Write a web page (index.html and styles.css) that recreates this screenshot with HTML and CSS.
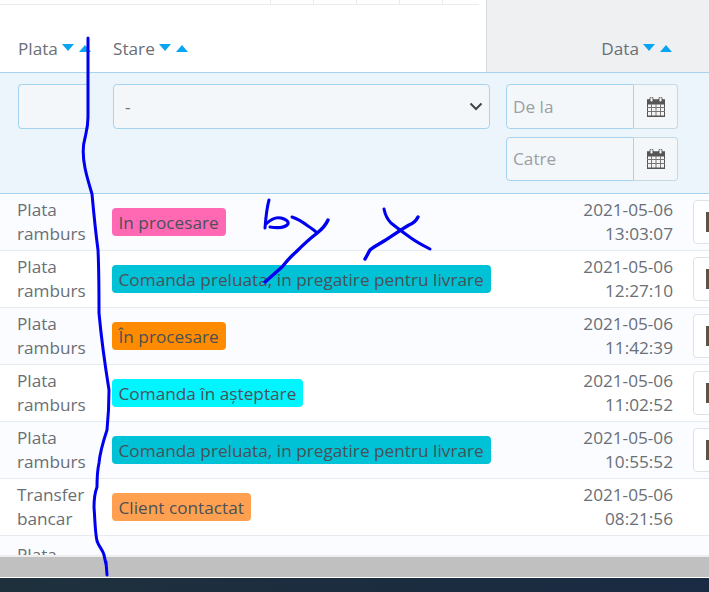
FILE: index.html
```html
<!DOCTYPE html>
<html lang="ro">
<head>
<meta charset="utf-8">
<title>Comenzi</title>
<link rel="stylesheet" href="styles.css">
</head>
<body>
<div class="page">
  <div class="table">
    <div class="head">
      <div class="head-left">
        <div class="strip"><i></i><i></i><i></i><i></i><i></i></div>
        <div class="head-labels">
          <div class="th th-plata">Plata <span class="sort"><b class="down"></b><b class="up"></b></span></div>
          <div class="th th-stare">Stare <span class="sort"><b class="down"></b><b class="up"></b></span></div>
        </div>
      </div>
      <div class="head-right">
        <div class="th">Data <span class="sort"><b class="down"></b><b class="up"></b></span></div>
      </div>
    </div>

    <div class="filters">
      <input class="field field-plata" type="text" aria-label="Plata">
      <div class="select-wrap">
        <select class="field field-select" aria-label="Stare"><option>-</option></select>
        <svg class="chevron" width="14" height="9" viewBox="0 0 14 9"><path d="M1.5 1.5 7 7l5.5-5.5" fill="none" stroke="#444" stroke-width="2"/></svg>
      </div>
      <div class="dates">
        <div class="date-group">
          <input class="field date-input" type="text" placeholder="De la">
          <span class="date-btn"><svg class="cal" width="18" height="20" viewBox="0 0 18 20"><use href="#cal"/></svg></span>
        </div>
        <div class="date-group">
          <input class="field date-input date-input-low" type="text" placeholder="Catre">
          <span class="date-btn"><svg class="cal" width="18" height="20" viewBox="0 0 18 20"><use href="#cal"/></svg></span>
        </div>
      </div>
    </div>

    <div class="row odd">
      <div class="pay">Plata<br>ramburs</div>
      <div><span class="badge pink">In procesare</span></div>
      <div class="when">2021-05-06<br>13:03:07</div>
      <div class="act"><span class="btn"><span class="btn-ico"></span></span></div>
    </div>
    <div class="row">
      <div class="pay">Plata<br>ramburs</div>
      <div><span class="badge teal">Comanda preluata, in pregatire pentru livrare</span></div>
      <div class="when">2021-05-06<br>12:27:10</div>
      <div class="act"><span class="btn"><span class="btn-ico"></span></span></div>
    </div>
    <div class="row odd">
      <div class="pay">Plata<br>ramburs</div>
      <div><span class="badge orange">În procesare</span></div>
      <div class="when">2021-05-06<br>11:42:39</div>
      <div class="act"><span class="btn"><span class="btn-ico"></span></span></div>
    </div>
    <div class="row">
      <div class="pay">Plata<br>ramburs</div>
      <div><span class="badge cyan">Comanda în aşteptare</span></div>
      <div class="when">2021-05-06<br>11:02:52</div>
      <div class="act"><span class="btn"><span class="btn-ico"></span></span></div>
    </div>
    <div class="row odd">
      <div class="pay">Plata<br>ramburs</div>
      <div><span class="badge teal">Comanda preluata, in pregatire pentru livrare</span></div>
      <div class="when">2021-05-06<br>10:55:52</div>
      <div class="act"><span class="btn"><span class="btn-ico"></span></span></div>
    </div>
    <div class="row">
      <div class="pay">Transfer<br>bancar</div>
      <div><span class="badge peach">Client contactat</span></div>
      <div class="when">2021-05-06<br>08:21:56</div>
      <div class="act"></div>
    </div>
    <div class="row odd row-cut">
      <div class="pay">Plata<br>ramburs</div>
    </div>
  </div>
  <div class="scrollbar"></div>
  <div class="taskbar"></div>

  <svg class="ink" width="709" height="592" viewBox="0 0 709 592">
    <defs>
      <g id="cal">
        <rect x="0.5" y="3" width="17" height="16.5" fill="#f4f4f4" stroke="#555"/>
        <rect x="0" y="2.5" width="18" height="5" fill="#555"/>
        <rect x="3" y="0" width="3" height="5" rx="1.5" fill="#f4f4f4" stroke="#555" stroke-width="1"/>
        <rect x="12" y="0" width="3" height="5" rx="1.5" fill="#f4f4f4" stroke="#555" stroke-width="1"/>
        <path d="M4.5 7v12M9 7v12M13.5 7v12M0 10.500h18M0 14.500h18" stroke="#777" stroke-width="1" fill="none"/>
        <rect x="0" y="18.500" width="18" height="1.500" fill="#555"/>
      </g>
    </defs>
    <g fill="none" stroke="#0000f0" stroke-width="3" stroke-linecap="round" stroke-linejoin="round">
      <path d="M88 38V117C88 127 86 133 85 138C82 148 83 158 85 168C87 178 90 187 92 194C93 205 96 235 98 250C99 270 99 295 99 313C101 335 105 365 109 390C109 405 108 420 107 430C103 442 100 452 99 463C97 472 97 480 97 487C94 495 94 500 94 507C95 520 95 532 97 541C99 547 103 550 104 555C106 562 107 568 107 575L106 562"/>
      <path d="M269 200C267 207 266 215 265 228M266 224C271 219 277 217 281 218C285 219 289 221 288 224C285 228 276 228 270 227"/>
      <path d="M292 217C298 219 304 223 308 226C311 228 314 230 316 232"/>
      <path d="M328 220C325 227 321 230 316 234C308 240 301 247 296 252C290 257 286 262 282 267L265 282" stroke-width="3.400"/>
      <path d="M384 209C385 214 387 219 391 223C396 227 404 233 411 238C418 243 424 246 430 249"/>
      <path d="M418 217C416 221 414 223 409 225C402 229 392 236 384 241C378 245 373 247 370 250C368 253 367 256 365 259" stroke-width="3.400"/>
    </g>
  </svg>
</div>
</body>
</html>
```
FILE: styles.css
```css
* { box-sizing: border-box; }
html, body { margin: 0; padding: 0; }
body { font-family: "Open Sans", "Liberation Sans", sans-serif; font-size: 17.2px; line-height: 24px; color: #6a6f75; background: #fff; }
.page { position: relative; width: 709px; height: 592px; overflow: hidden; display: flex; flex-direction: column; }
.table { height: 555px; overflow: hidden; flex: none; }

.head { display: flex; height: 72px; }
.head-left { width: 486px; flex: none; display: flex; flex-direction: column; background: #fff; }
.strip { height: 5px; width: 479px; border-bottom: 1px solid #e9ecef; display: flex; padding-left: 270px; gap: 42px; }
.strip i { display: block; width: 1px; height: 4px; background: #e9ecef; }
.head-labels { flex: 1; display: flex; padding: 32px 0 0 18px; }
.th { white-space: nowrap; display: flex; align-items: center; height: 24px; gap: 4px; }
.th-plata { width: 95px; }
.head-right { flex: 1; background: #eff0f2; border-left: 1px solid #d8dadc; display: flex; justify-content: flex-end; padding: 37px 37px 0 0; }
.sort { display: inline-flex; gap: 5px; margin-top: -2px; }
.sort b { display: block; width: 0; height: 0; border-left: 6px solid transparent; border-right: 6px solid transparent; }
.sort .down { border-top: 7px solid #0aa5f0; }
.sort .up { border-bottom: 7px solid #0aa5f0; margin-top: 1px; }

.filters { height: 122px; background: #ecf5fb; border-top: 1px solid #a6d4ef; border-bottom: 1px solid #a6d4ef; display: flex; align-items: flex-start; padding: 11px 0 0 18px; }
.field { font: inherit; background: #f3f7fa; border: 1px solid #a6d4ef; color: #6a6f75; }
.field-plata { width: 71px; height: 45px; border-radius: 4px 0 0 4px; border-right: 0; margin-right: 24px; flex: none; }
.select-wrap { position: relative; width: 377px; height: 45px; flex: none; margin-right: 16px; }
.field-select { width: 100%; height: 100%; border-radius: 4px; padding: 0 11px; appearance: none; -webkit-appearance: none; }
.chevron { position: absolute; right: 7px; top: 18px; }
.dates { display: flex; flex-direction: column; gap: 8px; width: 172px; flex: none; }
.date-group { display: flex; height: 45px; }
.date-group + .date-group { height: 44px; }
.date-input { width: 128px; flex: none; height: 100%; padding: 0 6px; border-radius: 4px 0 0 4px; }
.date-input-low { padding-bottom: 2px; }
.date-input::placeholder { color: #9c9fa3; opacity: 1; }
.date-btn { flex: 1; display: flex; align-items: center; justify-content: center; background: #f3f7fa; border: 1px solid #c6d8e2; border-left: 0; border-radius: 0 4px 4px 0; }

.row { display: grid; grid-template-columns: 96px 391px 186px 36px; height: 57px; align-items: center; background: #fff; border-bottom: 1px solid #e7eaef; }
.row.odd { background: #fafcff; }
.pay { padding-left: 17px; white-space: nowrap; }
.when { text-align: right; white-space: nowrap; }
.badge { display: inline-block; height: 28px; line-height: 29px; padding: 0 7px 0 6.500px; margin-left: 16px; border-radius: 4px; color: #4a5058; white-space: nowrap; letter-spacing: 0.020px; }
.pink { background: #ff69b4; }
.teal { background: #00c2d6; }
.orange { background: #ff8c00; }
.cyan { background: #00f5ff; }
.peach { background: #ffa050; }
.act { padding-left: 20px; overflow: hidden; height: 44px; }
.btn { display: flex; align-items: center; width: 40px; height: 44px; border: 1px solid #dfe2e6; border-radius: 4px; padding-left: 12px; background: #fff; }
.btn-ico { display: block; width: 10px; height: 20px; background: #5e5344; flex: none; }
.row-cut { align-items: start; padding-top: 7px; }

.scrollbar { height: 22px; flex: none; background: #c0c0c0; border-top: 2px solid #eeeeee; }
.taskbar { flex: 1; border-top: 1px solid #fff; background: linear-gradient(90deg, #1f303d, #1a2a42); }
.ink { position: absolute; left: 0; top: 0; pointer-events: none; }
```
